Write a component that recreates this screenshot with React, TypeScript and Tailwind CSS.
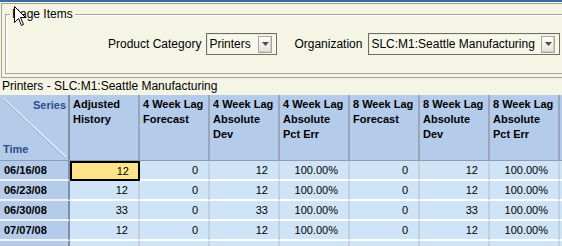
import React from 'react';

const COLUMNS: string[][] = [
  ['Adjusted', 'History'],
  ['4 Week Lag', 'Forecast'],
  ['4 Week Lag', 'Absolute', 'Dev'],
  ['4 Week Lag', 'Absolute', 'Pct Err'],
  ['8 Week Lag', 'Forecast'],
  ['8 Week Lag', 'Absolute', 'Dev'],
  ['8 Week Lag', 'Absolute', 'Pct Err'],
  [''],
];

const ROWS = [
  { time: '06/16/08', values: ['12', '0', '12', '100.00%', '0', '12', '100.00%', ''] },
  { time: '06/23/08', values: ['12', '0', '12', '100.00%', '0', '12', '100.00%', ''] },
  { time: '06/30/08', values: ['33', '0', '33', '100.00%', '0', '33', '100.00%', ''] },
  { time: '07/07/08', values: ['12', '0', '12', '100.00%', '0', '12', '100.00%', ''] },
  { time: '', values: ['', '', '', '', '', '', '', ''] },
];

const DropArrow: React.FC = () => (
  <div className="w-[14px] h-[17px] flex items-center justify-center border border-[#a7a69a] bg-gradient-to-b from-[#fdfdfb] to-[#e4e3da] shadow-[inset_-1px_-1px_0_#cfcfc4]">
    <svg width="7" height="4" viewBox="0 0 7 4">
      <path d="M0 0 H7 L3.5 4 Z" fill="#4d4d4d" />
    </svg>
  </div>
);

const Select: React.FC<{ value: string; width: string }> = ({ value, width }) => (
  <div className={`${width} h-[22px] flex items-center justify-between border border-[#6f6f63] shadow-[inset_1px_1px_0_#e9e9df] bg-[#f7f7ea] pl-[2px] pr-[4px]`}>
    <span className="text-[12px] leading-[14px] text-black">{value}</span>
    <DropArrow />
  </div>
);

const App: React.FC = () => {
  return (
    <div className="relative w-[562px] h-[246px] overflow-hidden bg-[#f5f5e6] font-['Liberation_Sans',Arial,sans-serif] text-black">
      <div className="h-[2px] bg-[#3e6cab]" />

      {/* Page items panel */}
      <div className="mt-px ml-px w-[600px] h-[75px] border border-[#a3a394] pt-[3px]">
        <fieldset className="ml-[3px] h-[67px] border border-[#a8a898] shadow-[inset_1px_1px_0_#ffffff] pl-[4px]">
          <legend className="px-[2px] text-[12px] leading-[14px]">Page Items</legend>
          <div className="flex items-center mt-[12px] ml-[98px] text-[12px]">
            <span className="mr-[5px]">Product Category</span>
            <Select value="Printers" width="w-[71px]" />
            <span className="ml-[17px] mr-[6px]">Organization</span>
            <Select value="SLC:M1:Seattle Manufacturing" width="w-[192px]" />
          </div>
        </fieldset>
      </div>

      <div className="h-[17px] pl-[2px] text-[12px] leading-[17px]">Printers - SLC:M1:Seattle Manufacturing</div>

      {/* Crosstab */}
      <div className="grid grid-cols-[repeat(9,70px)] w-[630px] text-[11px]">
        <div className="relative h-[66px] bg-[#b4cbea] border-r-2 border-r-[#7f8fa6] border-b border-b-[#8e9cb0]">
          <svg className="absolute left-0 top-0" width="68" height="65" viewBox="0 0 68 65">
            <line x1="3" y1="3" x2="66" y2="62" stroke="#e8eef8" strokeWidth="1.5" />
            <line x1="3" y1="4" x2="65" y2="63" stroke="#8fa2bd" strokeWidth="0.8" />
          </svg>
          <span className="absolute right-[2px] top-[3px] font-bold leading-[15px] text-[#2d4e8c]">Series</span>
          <span className="absolute left-[3px] bottom-[3px] font-bold leading-[15px] text-[#2d4e8c]">Time</span>
        </div>
        {COLUMNS.map((lines, i) => (
          <div
            key={i}
            className="h-[66px] bg-[#b4cbea] border-r-2 border-r-[#97a6bb] border-b border-b-[#8e9cb0] pl-[3px] pt-[2px] font-bold leading-[15px]"
          >
            {lines.map((l, j) => (
              <div key={j} className="whitespace-nowrap">{l}</div>
            ))}
          </div>
        ))}

        {ROWS.map((row, r) => (
          <React.Fragment key={r}>
            <div className="h-[20px] bg-[#b4cbea] border-r-2 border-r-[#7f8fa6] border-b-2 border-b-[#eef3fa] pl-[4px] flex items-center font-bold">
              {row.time}
            </div>
            {row.values.map((v, c) =>
              r === 0 && c === 0 ? (
                <div key={c} className="h-[20px] bg-[#ffe48c] border-2 border-black pr-[9px] flex items-center justify-end">
                  {v}
                </div>
              ) : (
                <div
                  key={c}
                  className="h-[20px] bg-[#cfe4f6] border-r-2 border-r-[#c5ced9] border-b-2 border-b-[#ffffff] pr-[10px] flex items-center justify-end"
                >
                  {v}
                </div>
              )
            )}
          </React.Fragment>
        ))}
      </div>

      {/* mouse pointer */}
      <svg className="absolute left-[14px] top-[6px]" width="13" height="21" viewBox="0 0 13 21">
        <path d="M0.5 0.5 V16.5 L4.5 12.5 L7.5 19.5 L9.5 18.5 L6.5 11.5 H11.5 Z" fill="#ffffff" stroke="#000000" strokeWidth="1" />
      </svg>
    </div>
  );
};

export default App;
